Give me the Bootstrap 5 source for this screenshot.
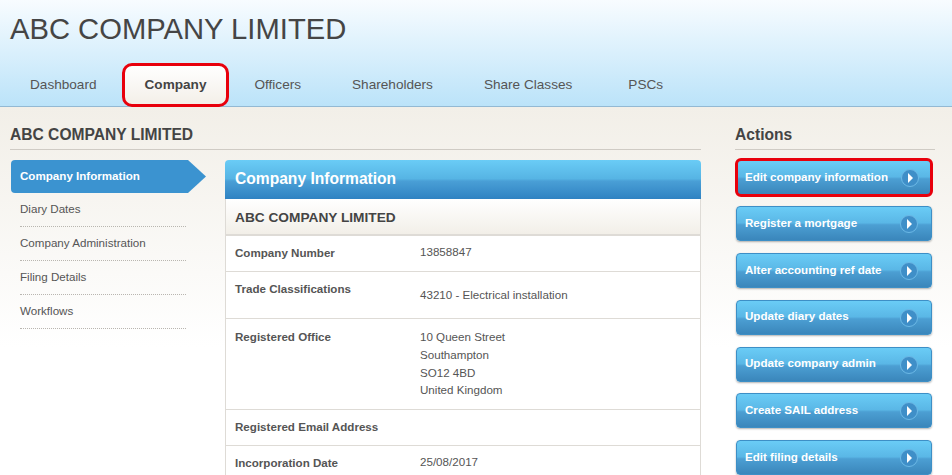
<!DOCTYPE html>
<html lang="en">
<head>
  <meta charset="UTF-8" />
  <meta name="viewport" content="width=device-width, initial-scale=1" />
  <title>ABC COMPANY LIMITED</title>
  <link href="https://cdn.jsdelivr.net/npm/bootstrap@5.3.2/dist/css/bootstrap.min.css" rel="stylesheet">
  <style>
    html, body {
      height: 475px;
      overflow: hidden;
    }
    body {
      font-family: "Liberation Sans", Arial, sans-serif;
      font-size: 11.6px;
      color: #444;
      background: #fff;
    }
    .top-head {
      height: 107px;
      background: linear-gradient(#f8fcff, #bbe3f9);
      border-bottom: 1px solid #93b9d3;
      padding: 12px 10px 0;
    }
    .top-head h1 {
      font-size: 29.2px;
      line-height: 34px;
      color: #454545;
      margin: 0 0 15px;
    }
    .top-tabs a {
      font-size: 13.6px;
      color: #555;
      text-decoration: none;
      height: 44px;
      line-height: 48px;
      padding: 0 20px;
      margin-right: 11px;
    }
    .top-tabs a.on {
      font-weight: 700;
      color: #444;
      background: linear-gradient(#fff, #f3efe8);
      outline: 3px solid #e8000c;
      outline-offset: -1px;
      border-radius: 8px;
      padding: 0 21px;
      margin: 4px 7px 0 -4px;
      height: 40px;
      line-height: 40px;
    }
    .top-tabs a.tab-last { margin-left: 5px; }
    .page-body {
      height: 368px;
      background: linear-gradient(#f2efe8, #fff 240px);
      padding: 18px 17px 0 10px;
    }
    .main-col { width: 691px; flex: none; }
    .left-col { width: 196px; flex: none; }
    .mid-col { width: 476px; flex: none; }
    .right-col { width: 200px; flex: none; margin-left: 34px; }
    .crumb-title {
      font-size: 15.6px;
      font-weight: 700;
      line-height: 20px;
      color: #444;
      border-bottom: 1px solid #cfcbc4;
      padding-bottom: 4px;
      margin-bottom: 10px;
    }
    .side-on {
      display: block;
      width: 195px;
      margin-left: 1px;
      height: 33px;
      line-height: 31px;
      padding-left: 9px;
      color: #fff;
      font-weight: 700;
      text-decoration: none;
      background: #3b93d0;
      border-radius: 4px 0 0 4px;
      clip-path: polygon(0 0, 177px 0, 100% 50%, 177px 100%, 0 100%);
    }
    .side-link {
      display: block;
      width: 166px;
      margin-left: 10px;
      height: 34px;
      line-height: 32px;
      color: #555;
      text-decoration: none;
      border-bottom: 1px dotted #b9b6b0;
    }
    .panel-head {
      height: 39px;
      padding-left: 10px;
      line-height: 37px;
      font-size: 15.6px;
      font-weight: 700;
      color: #fff;
      border-radius: 4px 4px 0 0;
      background: linear-gradient(#6accf6, #56b4e4 48%, #4a9fd6 54%, #2f82c2);
    }
    .panel-box {
      border-left: 1px solid #dedbd6;
      border-right: 1px solid #dedbd6;
      background: #fff;
    }
    .panel-sub {
      height: 37px;
      padding-left: 9px;
      line-height: 37px;
      font-size: 13.7px;
      font-weight: 700;
      background: linear-gradient(#fff, #f2efe8);
      border-bottom: 2px solid #dedbd6;
    }
    .info-row {
      display: flex;
      height: 36px;
      padding: 7px 9px 0;
      border-bottom: 1px solid #dedbd6;
      line-height: 17.5px;
    }
    .info-row.trade-row { height: 47px; }
    .info-row.office-row { height: 91px; padding-top: 8px; }
    .info-row dt { width: 185px; flex: none; font-weight: 700; margin: 0; color: #555; padding-top: 1px; }
    .info-row dd { margin: 0; color: #555; }
    .trade-row dd { padding-top: 7px; }
    .office-row dd { padding-top: 1px; line-height: 17.75px; }
    .act-btn {
      display: flex;
      align-items: center;
      justify-content: space-between;
      width: 196px;
      height: 35px;
      margin: 0 0 11.85px 1px;
      padding: 0 13px 2px 8px;
      color: #fff;
      font-weight: 700;
      text-decoration: none;
      border: 1px solid #3d8fc6;
      border-radius: 4px;
      box-shadow: 0 1px 2px rgba(0,0,0,.3);
      background: linear-gradient(#6accf6, #5ab7e6 48%, #4c9fd3 54%, #3a86bb);
    }
    .act-btn.marked {
      height: 39px;
      width: 198px;
      margin: -2px 0 9px;
      padding: 0 11px 2px 7px;
      border: 3px solid #e8000c;
      border-radius: 6px;
      box-shadow: none;
    }
    .act-dot {
      width: 18px;
      height: 18px;
      border-radius: 50%;
      background: #3f8fc8;
      border: 1px solid #6cb9e6;
      display: flex;
      align-items: center;
      justify-content: center;
      margin-top: 3px;
    }
  </style>
</head>
<body>
<div class="top-head">
  <h1>ABC COMPANY LIMITED</h1>
  <div class="top-tabs d-flex">
    <a href="#">Dashboard</a>
    <a href="#" class="on">Company</a>
    <a href="#">Officers</a>
    <a href="#">Shareholders</a>
    <a href="#">Share Classes</a>
    <a href="#" class="tab-last">PSCs</a>
  </div>
</div>
<div class="page-body d-flex">
  <div class="main-col">
    <div class="crumb-title">ABC COMPANY LIMITED</div>
    <div class="d-flex justify-content-between">
      <div class="left-col">
        <a class="side-on" href="#">Company Information</a>
        <a class="side-link" href="#">Diary Dates</a>
        <a class="side-link" href="#">Company Administration</a>
        <a class="side-link" href="#">Filing Details</a>
        <a class="side-link" href="#">Workflows</a>
      </div>
      <div class="mid-col">
        <div class="panel-head">Company Information</div>
        <div class="panel-box">
          <div class="panel-sub">ABC COMPANY LIMITED</div>
          <dl class="m-0">
            <div class="info-row"><dt>Company Number</dt><dd>13858847</dd></div>
            <div class="info-row trade-row"><dt>Trade Classifications</dt><dd>43210 - Electrical installation</dd></div>
            <div class="info-row office-row"><dt>Registered Office</dt><dd>10 Queen Street<br>Southampton<br>SO12 4BD<br>United Kingdom</dd></div>
            <div class="info-row"><dt>Registered Email Address</dt><dd></dd></div>
            <div class="info-row"><dt>Incorporation Date</dt><dd>25/08/2017</dd></div>
          </dl>
        </div>
      </div>
    </div>
  </div>
  <div class="right-col">
    <div class="crumb-title">Actions</div>
    <a class="act-btn marked" href="#">Edit company information<span class="act-dot"><svg width="7" height="10" viewBox="0 0 7 10"><path d="M1 0l5 5-5 5z" fill="#fff"/></svg></span></a>
    <a class="act-btn" href="#">Register a mortgage<span class="act-dot"><svg width="7" height="10" viewBox="0 0 7 10"><path d="M1 0l5 5-5 5z" fill="#fff"/></svg></span></a>
    <a class="act-btn" href="#">Alter accounting ref date<span class="act-dot"><svg width="7" height="10" viewBox="0 0 7 10"><path d="M1 0l5 5-5 5z" fill="#fff"/></svg></span></a>
    <a class="act-btn" href="#">Update diary dates<span class="act-dot"><svg width="7" height="10" viewBox="0 0 7 10"><path d="M1 0l5 5-5 5z" fill="#fff"/></svg></span></a>
    <a class="act-btn" href="#">Update company admin<span class="act-dot"><svg width="7" height="10" viewBox="0 0 7 10"><path d="M1 0l5 5-5 5z" fill="#fff"/></svg></span></a>
    <a class="act-btn" href="#">Create SAIL address<span class="act-dot"><svg width="7" height="10" viewBox="0 0 7 10"><path d="M1 0l5 5-5 5z" fill="#fff"/></svg></span></a>
    <a class="act-btn" href="#">Edit filing details<span class="act-dot"><svg width="7" height="10" viewBox="0 0 7 10"><path d="M1 0l5 5-5 5z" fill="#fff"/></svg></span></a>
  </div>
</div>
<script src="https://cdn.jsdelivr.net/npm/bootstrap@5.3.2/dist/js/bootstrap.bundle.min.js"></script>
</body>
</html>
